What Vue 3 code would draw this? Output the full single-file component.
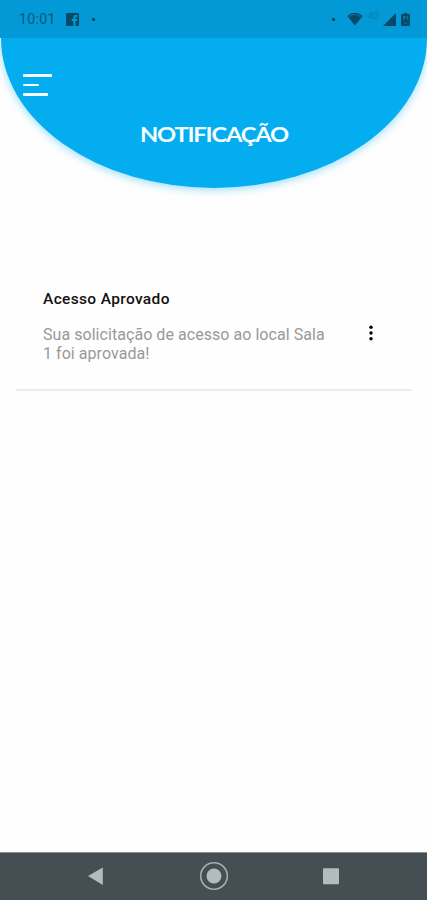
<script setup>
    import { ref } from 'vue';

    const notifications = ref([
        {
            id: 1,
            title: 'Acesso Aprovado',
            message: 'Sua solicitação de acesso ao local Sala 1 foi aprovada!'
        }
    ])
</script>

<template>
    <div class="screen">
        <div class="status">
            <span class="status__time">10:01</span>
            <svg class="status__app" width="13" height="13" viewBox="0 0 13 13">
                <path fill="#064a67" fill-rule="evenodd" d="M1 0h11q1 0 1 1v11q0 1-1 1H9.400V8h1.700l.3-2H9.400V4.700q0-.9 1-.9h1.200V2H9.800Q7.300 2 7.300 4.400V6H5.600v2h1.700v5H1q-1 0-1-1V1q0-1 1-1z" />
            </svg>
            <span class="status__dot"></span>
            <span class="status__space"></span>
            <span class="status__dot"></span>
            <svg class="status__wifi" width="16" height="14" viewBox="0 0 16 14">
                <path fill="#064a67" d="M8 13.500 .3 4Q8-2.500 15.700 4z" />
                <path fill="none" stroke="#08749f" stroke-width="1.200" d="M2.300 4.700Q8 .3 13.700 4.700" />
            </svg>
            <span class="status__network">4G</span>
            <svg class="status__signal" width="13" height="13" viewBox="0 0 13 13">
                <path fill="#064a67" d="M13 0v13H0z" />
            </svg>
            <svg class="status__battery" width="9" height="13" viewBox="0 0 9 13">
                <path fill="#064a67" d="M3 0h3v1h1.500Q9 1 9 2.500v9Q9 13 7.500 13h-6Q0 13 0 11.500v-9Q0 1 1.500 1H3z" />
                <path fill="#08739e" d="M2 3h5v3.500H2z" />
                <path fill="#064a67" d="M4 3.500h1.500V7H4z" />
                <path fill="#08739e" d="M3 9.500h3v1H3z" />
            </svg>
        </div>

        <header class="header">
            <button class="menu" aria-label="Menu">
                <span class="menu__line"></span>
                <span class="menu__line menu__line--short"></span>
                <span class="menu__line menu__line--medium"></span>
            </button>
            <svg class="header__title" width="152" height="26" viewBox="0 0 152 26">
                <text x="0" y="19" textLength="148" lengthAdjust="spacingAndGlyphs">NOTIFICAÇÃO</text>
            </svg>
        </header>

        <main class="list">
            <div v-for="item in notifications" :key="item.id" class="card">
                <h2 class="card__title">{{ item.title }}</h2>
                <div class="card__body">
                    <p class="card__message">{{ item.message }}</p>
                    <button class="card__more" aria-label="Mais">
                        <svg width="4" height="16" viewBox="0 0 4 16">
                            <circle cx="2" cy="2.200" r="1.700" />
                            <circle cx="2" cy="8" r="1.700" />
                            <circle cx="2" cy="13.800" r="1.700" />
                        </svg>
                    </button>
                </div>
            </div>
        </main>

        <nav class="nav">
            <svg width="30" height="30" viewBox="0 0 30 30">
                <path fill="#b4bbbd" d="M7 15 21.800 6.500v17.500z" />
            </svg>
            <svg width="30" height="30" viewBox="0 0 30 30">
                <circle cx="15" cy="15" r="13.300" fill="none" stroke="#a4adb0" stroke-width="1.600" />
                <circle cx="15" cy="15" r="7.500" fill="#b4bbbd" />
            </svg>
            <svg width="30" height="30" viewBox="0 0 30 30">
                <rect x="6" y="7.300" width="16" height="16" rx="1" fill="#b4bbbd" />
            </svg>
        </nav>
    </div>
</template>

<style>
    body {
        margin: 0;
        background-color: #fff;
    }
</style>

<style scoped>
    .screen {
        display: flex;
        flex-direction: column;
        width: 100%;
        height: 900px;
        overflow: hidden;
        background-color: #fefefe;
        font-family: Roboto, "Liberation Sans", sans-serif;
    }
    svg {
        display: block;
        flex: none;
    }
    button {
        padding: 0;
        border: none;
        background: none;
        cursor: pointer;
    }

    .status {
        display: flex;
        align-items: center;
        box-sizing: border-box;
        height: 38px;
        padding: 0 17px 0 19px;
        background-color: #0399d6;
        color: #075778;
        flex: none;
        z-index: 1;
    }
    .status__time {
        width: 47px;
        font-size: 14px;
        letter-spacing: 0.4px;
    }
    .status__dot {
        width: 3px;
        height: 3px;
        border-radius: 1px;
        background-color: #064a67;
    }
    .status__app {
        margin-right: 13px;
    }
    .status__space {
        flex: 1;
    }
    .status__wifi {
        margin-left: 12px;
    }
    .status__network {
        width: 12px;
        margin: -6px 3px 0 5px;
        font-size: 9px;
        color: #0779a7;
    }
    .status__battery {
        margin-left: 5px;
    }

    .header {
        display: flex;
        flex-direction: column;
        height: 150px;
        margin-left: 1px;
        border-radius: 0 0 50% 50% / 0 0 100% 100%;
        background-color: #03adef;
        box-shadow: 0 2px 8px rgba(3, 173, 239, 0.4);
        flex: none;
    }
    .menu {
        display: flex;
        flex-direction: column;
        row-gap: 7px;
        width: 29px;
        margin: 36px 0 0 22px;
    }
    .menu__line {
        width: 29px;
        height: 2.500px;
        border-radius: 1px;
        background-color: #f4fcff;
    }
    .menu__line--short {
        width: 16px;
    }
    .menu__line--medium {
        width: 25px;
    }
    .header__title {
        margin: 27px 0 0 139px;
        font-family: Lato, sans-serif;
        font-size: 20px;
        font-weight: 700;
        letter-spacing: -1px;
        fill: #f6fdff;
    }

    .list {
        flex: 1;
        padding: 101px 15px 0 16px;
    }
    .card {
        box-sizing: border-box;
        height: 102px;
        padding-left: 27px;
        border-bottom: 2px solid #ededed;
    }
    .card__title {
        margin: 0 0 16px;
        font-size: 15.500px;
        line-height: 20px;
        font-weight: 500;
        letter-spacing: 0.35px;
        color: #111;
    }
    .card__body {
        display: flex;
        align-items: flex-start;
    }
    .card__message {
        width: 290px;
        margin: 0;
        font-size: 16px;
        line-height: 19px;
        letter-spacing: 0.05px;
        color: #999;
    }
    .card__more {
        margin: 0 0 0 36px;
    }

    .nav {
        display: flex;
        justify-content: space-between;
        box-sizing: border-box;
        height: 48px;
        padding: 8px 80px 0 81px;
        border-top: 1px solid #8b9496;
        background-color: #454e53;
        flex: none;
    }
</style>
